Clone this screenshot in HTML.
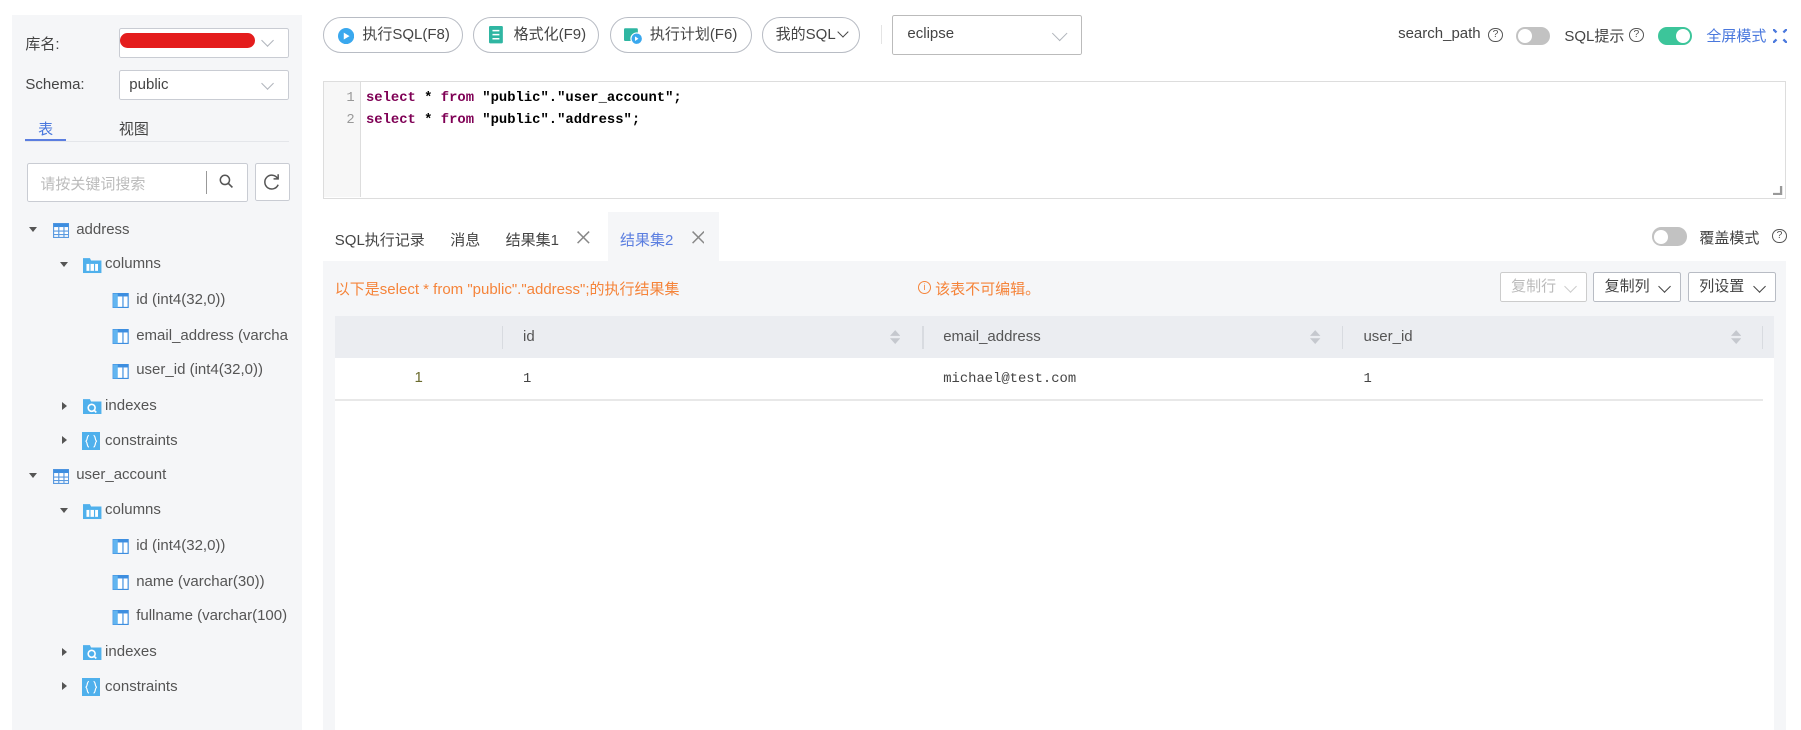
<!DOCTYPE html>
<html><head><meta charset="utf-8">
<style>
html,body{margin:0;padding:0;width:1801px;height:730px;overflow:hidden;background:#fff;}
#w{position:absolute;left:0;top:0;width:1560px;height:632px;zoom:1.1545;overflow:hidden;font-family:"Liberation Sans","Noto Sans CJK SC",sans-serif;font-size:13px;color:#555;}
.a{position:absolute;white-space:nowrap;}
.sb{left:10px;top:13px;width:252px;height:619px;background:#f5f6f8;}
.sel{position:absolute;background:#fff;border:1px solid #c9ccd3;border-radius:2px;box-sizing:border-box;}
.chev{position:absolute;width:7px;height:7px;border-right:1px solid #b0b4bb;border-bottom:1px solid #b0b4bb;transform:rotate(45deg);}
.btn{position:absolute;top:15px;height:31px;border:1px solid #b8bcc4;border-radius:16px;box-sizing:border-box;background:#fff;line-height:29px;color:#444;}
.tree{position:absolute;font-size:13px;color:#555;}
.car{position:absolute;width:0;height:0;}
.cd{border-left:4px solid transparent;border-right:4px solid transparent;border-top:5px solid #555;}
.cr{border-top:4px solid transparent;border-bottom:4px solid transparent;border-left:5px solid #555;}
.tog{position:absolute;width:30px;height:16px;border-radius:8px;background:#c2c2c2;}
.tog::after{content:"";position:absolute;top:2px;left:2px;width:12px;height:12px;border-radius:6px;background:#fff;}
.tog.on{background:#3cc59a;}.tog.on::after{left:16px;}
.q{position:absolute;width:11px;height:11px;border:1px solid #555;border-radius:50%;font-size:9px;line-height:11px;text-align:center;color:#555;}
.code{font-family:"Liberation Mono",monospace;font-weight:bold;font-size:12px;color:#000;}
.kw{color:#7f0055;}
.sbtn{position:absolute;top:236px;height:26px;border:1px solid #b8bcc4;border-radius:2px;box-sizing:border-box;background:#fff;line-height:24px;padding-left:9px;color:#444;}
.th{position:absolute;top:274px;height:36px;line-height:36px;color:#555;}
.vl{position:absolute;top:282px;width:1px;height:20px;background:#d8dbe0;}
.mono{font-family:"Liberation Mono",monospace;font-size:12px;color:#444;}
</style></head><body><div id="w">
<div class="a sb"></div>
<div class="a" style="left:22px;top:29px;color:#444">库名:</div>
<div class="sel" style="left:103px;top:24px;width:147px;height:26px"></div>
<div class="a" style="left:104px;top:29px;width:117px;height:13px;background:#e41d1d;border-radius:7px"></div>
<div class="chev" style="left:228px;top:31px"></div>
<div class="a" style="left:22px;top:66px;color:#444">Schema:</div>
<div class="sel" style="left:103px;top:61px;width:147px;height:26px"></div>
<div class="a" style="left:112px;top:66px;color:#444">public</div>
<div class="chev" style="left:228px;top:68px"></div>
<div class="a" style="left:33px;top:102px;color:#4a78dd">表</div>
<div class="a" style="left:103px;top:102px;color:#444">视图</div>
<div class="a" style="left:22px;top:122px;width:228px;height:1px;background:#e4e6ea"></div>
<div class="a" style="left:22px;top:120px;width:35px;height:2px;background:#5b7ee0"></div>
<div class="sel" style="left:23px;top:141px;width:192px;height:34px"></div>
<div class="a" style="left:35px;top:150px;color:#bbb">请按关键词搜索</div>
<div class="a" style="left:178px;top:148px;width:1px;height:20px;background:#999"></div>
<svg class="a" style="left:189px;top:150px" width="14" height="14" viewBox="0 0 14 14"><circle cx="6" cy="6" r="4" fill="none" stroke="#555" stroke-width="1.3"/><path d="M9 9l3.5 3.5" stroke="#555" stroke-width="1.4"/></svg>
<div class="sel" style="left:221px;top:141px;width:30px;height:33px"></div>
<svg class="a" style="left:227px;top:149px" width="17" height="17" viewBox="0 0 17 17"><path d="M13.5 5.5A6 6 0 1 0 14 11" fill="none" stroke="#555" stroke-width="1.3"/><path d="M14 2v4h-4" fill="none" stroke="#555" stroke-width="1.3"/></svg>

<svg width="0" height="0" style="position:absolute"><defs>
<symbol id="tb" viewBox="0 0 14 13"><rect x="0.5" y="0.5" width="13" height="12" fill="#fff" stroke="#5a9ae0"/><rect x="0.5" y="0.5" width="13" height="3" fill="#3d8ee0"/><path d="M5 3v10M9.5 3v10M0 7h14M0 10h14" stroke="#5a9ae0"/></symbol>
<symbol id="col" viewBox="0 0 14 13"><rect x="0.5" y="0.5" width="13" height="12" fill="#fff" stroke="#3d8ee0"/><rect x="0.5" y="0.5" width="13" height="2.5" fill="#3d8ee0"/><rect x="0.5" y="0.5" width="4" height="12" fill="#62b5f0"/><path d="M9 3v10" stroke="#3d8ee0"/></symbol>
<symbol id="fol" viewBox="0 0 16 14"><path d="M0 1h6l1 2h9v11H0z" fill="#4fb0ec"/><rect x="3" y="6" width="10" height="6" fill="#fff"/><path d="M6 6v6M10 6v6" stroke="#4fb0ec"/></symbol>
<symbol id="idx" viewBox="0 0 16 14"><path d="M0 1h6l1 2h9v11H0z" fill="#4fb0ec"/><circle cx="7.5" cy="8.5" r="3" fill="none" stroke="#fff" stroke-width="1.4"/><path d="M9.5 10.5l2 2" stroke="#fff" stroke-width="1.4"/></symbol>
<symbol id="con" viewBox="0 0 16 16"><rect width="16" height="16" fill="#4fb0ec"/><path d="M6 3c-2 0-1 5-3 5 2 0 1 5 3 5M10 3c2 0 1 5 3 5-2 0-1 5-3 5" fill="none" stroke="#fff"/></symbol>
</defs></svg>

<div class="car cd" style="left:25px;top:197px"></div><svg class="a" style="left:46px;top:193px" width="14" height="13"><use href="#tb"/></svg><div class="tree" style="left:66px;top:191px">address</div>
<div class="car cd" style="left:52px;top:227px"></div><svg class="a" style="left:72px;top:223px" width="16" height="14"><use href="#fol"/></svg><div class="tree" style="left:91px;top:221px">columns</div>
<svg class="a" style="left:97px;top:254px" width="15" height="13"><use href="#col"/></svg><div class="tree" style="left:118px;top:252px">id (int4(32,0))</div>
<svg class="a" style="left:97px;top:285px" width="15" height="13"><use href="#col"/></svg><div class="tree" style="left:118px;top:283px">email_address (varcha</div>
<svg class="a" style="left:97px;top:315px" width="15" height="13"><use href="#col"/></svg><div class="tree" style="left:118px;top:313px">user_id (int4(32,0))</div>
<div class="car cr" style="left:54px;top:348px"></div><svg class="a" style="left:72px;top:345px" width="16" height="14"><use href="#idx"/></svg><div class="tree" style="left:91px;top:344px">indexes</div>
<div class="car cr" style="left:54px;top:378px"></div><svg class="a" style="left:71px;top:374px" width="16" height="16"><use href="#con"/></svg><div class="tree" style="left:91px;top:374px">constraints</div>
<div class="car cd" style="left:25px;top:410px"></div><svg class="a" style="left:46px;top:406px" width="14" height="13"><use href="#tb"/></svg><div class="tree" style="left:66px;top:404px">user_account</div>
<div class="car cd" style="left:52px;top:440px"></div><svg class="a" style="left:72px;top:436px" width="16" height="14"><use href="#fol"/></svg><div class="tree" style="left:91px;top:434px">columns</div>
<svg class="a" style="left:97px;top:467px" width="15" height="13"><use href="#col"/></svg><div class="tree" style="left:118px;top:465px">id (int4(32,0))</div>
<svg class="a" style="left:97px;top:498px" width="15" height="13"><use href="#col"/></svg><div class="tree" style="left:118px;top:496px">name (varchar(30))</div>
<svg class="a" style="left:97px;top:528px" width="15" height="13"><use href="#col"/></svg><div class="tree" style="left:118px;top:526px">fullname (varchar(100)</div>
<div class="car cr" style="left:54px;top:561px"></div><svg class="a" style="left:72px;top:558px" width="16" height="14"><use href="#idx"/></svg><div class="tree" style="left:91px;top:557px">indexes</div>
<div class="car cr" style="left:54px;top:591px"></div><svg class="a" style="left:71px;top:587px" width="16" height="16"><use href="#con"/></svg><div class="tree" style="left:91px;top:587px">constraints</div>

<div class="btn" style="left:280px;width:121px;padding-left:33px"><svg style="position:absolute;left:12px;top:8px" width="14" height="14"><circle cx="7" cy="7" r="7" fill="#3aa8ee"/><path d="M5 4l5 3-5 3z" fill="#fff"/></svg>执行SQL(F8)</div>
<div class="btn" style="left:410px;width:109px;padding-left:34px"><svg style="position:absolute;left:13px;top:7px" width="12" height="15"><rect width="12" height="15" rx="1" fill="#2fb6a2"/><path d="M3 4h6M3 7.5h6M3 11h6" stroke="#fff" stroke-width="1.3"/></svg>格式化(F9)</div>
<div class="btn" style="left:528px;width:123px;padding-left:34px"><svg style="position:absolute;left:12px;top:7px" width="16" height="16"><rect x="0" y="2" width="12" height="11" rx="1" fill="#2fb6a2"/><circle cx="11" cy="11" r="5" fill="#3aa8ee" stroke="#fff"/><path d="M9.5 9l3 2-3 2z" fill="#fff"/></svg>执行计划(F6)</div>
<div class="btn" style="left:660px;width:85px;padding-left:11px">我的SQL<span style="display:inline-block;width:6px;height:6px;border-right:1.3px solid #444;border-bottom:1.3px solid #444;transform:rotate(45deg);margin-left:3px;position:relative;top:-3px"></span></div>
<div class="a" style="left:763px;top:22px;width:1px;height:16px;background:#e4e4e4"></div>
<div class="sel" style="left:773px;top:13px;width:164px;height:35px;border-color:#bbb"></div>
<div class="a" style="left:786px;top:22px;color:#444">eclipse</div>
<div class="chev" style="left:913px;top:24px;width:9px;height:9px"></div>

<div class="a" style="left:1211px;top:22px;color:#444">search_path</div>
<div class="q" style="left:1289px;top:24px">?</div>
<div class="tog" style="left:1313px;top:23px"></div>
<div class="a" style="left:1355px;top:22px;color:#444">SQL提示</div>
<div class="q" style="left:1411px;top:24px">?</div>
<div class="tog on" style="left:1436px;top:23px"></div>
<div class="a" style="left:1478px;top:22px;color:#4a78dd">全屏模式</div>
<svg class="a" style="left:1536px;top:25px" width="12" height="12"><path d="M0 0l3 3M12 0l-3 3M0 12l3-3M12 12l-3-3" stroke="#4a78dd" stroke-width="2"/></svg>

<div class="a" style="left:280px;top:70px;width:1267px;height:102px;border:1px solid #ddd;box-sizing:border-box"></div>
<div class="a" style="left:281px;top:71px;width:31px;height:100px;background:#f7f7f7;border-right:1px solid #ddd"></div>
<div class="a code" style="left:300px;top:78px;font-weight:normal;color:#999">1</div>
<div class="a code" style="left:300px;top:97px;font-weight:normal;color:#999">2</div>
<div class="a code" style="left:317px;top:78px"><span class="kw">select</span> * <span class="kw">from</span> "public"."user_account";</div>
<div class="a code" style="left:317px;top:97px"><span class="kw">select</span> * <span class="kw">from</span> "public"."address";</div>
<svg class="a" style="left:1536px;top:161px" width="8" height="8"><path d="M7 0v7H0" fill="none" stroke="#999" stroke-width="2"/></svg>

<div class="a" style="left:290px;top:198px;color:#444">SQL执行记录</div>
<div class="a" style="left:390px;top:198px;color:#444">消息</div>
<div class="a" style="left:438px;top:198px;color:#444">结果集1</div>
<svg class="a" style="left:500px;top:200px" width="11" height="11"><path d="M0.5 0.5l10 10M10.5 0.5l-10 10" stroke="#888" stroke-width="1.3"/></svg>
<div class="a" style="left:527px;top:184px;width:96px;height:42px;background:#f5f6f8"></div>
<div class="a" style="left:537px;top:198px;color:#5b7ee0">结果集2</div>
<svg class="a" style="left:599px;top:200px" width="11" height="11"><path d="M0.5 0.5l10 10M10.5 0.5l-10 10" stroke="#888" stroke-width="1.3"/></svg>
<div class="tog" style="left:1431px;top:197px"></div>
<div class="a" style="left:1472px;top:197px;color:#444">覆盖模式</div>
<div class="q" style="left:1535px;top:198px">?</div>

<div class="a" style="left:280px;top:226px;width:1267px;height:406px;background:#f5f6f8"></div>
<div class="a" style="left:290px;top:241px;color:#f5843a">以下是select * from "public"."address";的执行结果集</div>
<div class="a" style="left:795px;top:243px;width:10px;height:10px;border:1px solid #f5843a;border-radius:50%;font-size:8px;line-height:10px;text-align:center;color:#f5843a">i</div>
<div class="a" style="left:810px;top:241px;color:#f5843a">该表不可编辑。</div>
<div class="sbtn" style="left:1299px;width:76px;color:#bbb;border-color:#ccc">复制行<div class="chev" style="left:57px;top:7px;border-color:#ccc"></div></div>
<div class="sbtn" style="left:1380px;width:76px">复制列<div class="chev" style="left:57px;top:7px;border-color:#444"></div></div>
<div class="sbtn" style="left:1462px;width:76px">列设置<div class="chev" style="left:57px;top:7px;border-color:#444"></div></div>

<div class="a" style="left:290px;top:274px;width:1247px;height:358px;background:#fff"></div>
<div class="a" style="left:290px;top:274px;width:1247px;height:36px;background:#ebedf1"></div>
<div class="vl" style="left:435px"></div><div class="vl" style="left:799px"></div><div class="vl" style="left:1162px"></div><div class="vl" style="left:1526px"></div>
<div class="th" style="left:453px">id</div>
<div class="th" style="left:817px">email_address</div>
<div class="th" style="left:1181px">user_id</div>
<svg class="a" style="left:771px;top:285px" width="9" height="14"><path d="M0 6l4.5-5 4.5 5zM0 8l4.5 5 4.5-5z" fill="#c5c8ce"/></svg>
<svg class="a" style="left:1135px;top:285px" width="9" height="14"><path d="M0 6l4.5-5 4.5 5zM0 8l4.5 5 4.5-5z" fill="#c5c8ce"/></svg>
<svg class="a" style="left:1499px;top:285px" width="9" height="14"><path d="M0 6l4.5-5 4.5 5zM0 8l4.5 5 4.5-5z" fill="#c5c8ce"/></svg>
<div class="a" style="left:290px;top:346px;width:1237px;height:1px;background:#e8e8e8"></div>
<div class="a" style="left:359px;top:320px;color:#6b6b2e">1</div>
<div class="a mono" style="left:453px;top:321px">1</div>
<div class="a mono" style="left:817px;top:321px">michael@test.com</div>
<div class="a mono" style="left:1181px;top:321px">1</div>
</div></body></html>
